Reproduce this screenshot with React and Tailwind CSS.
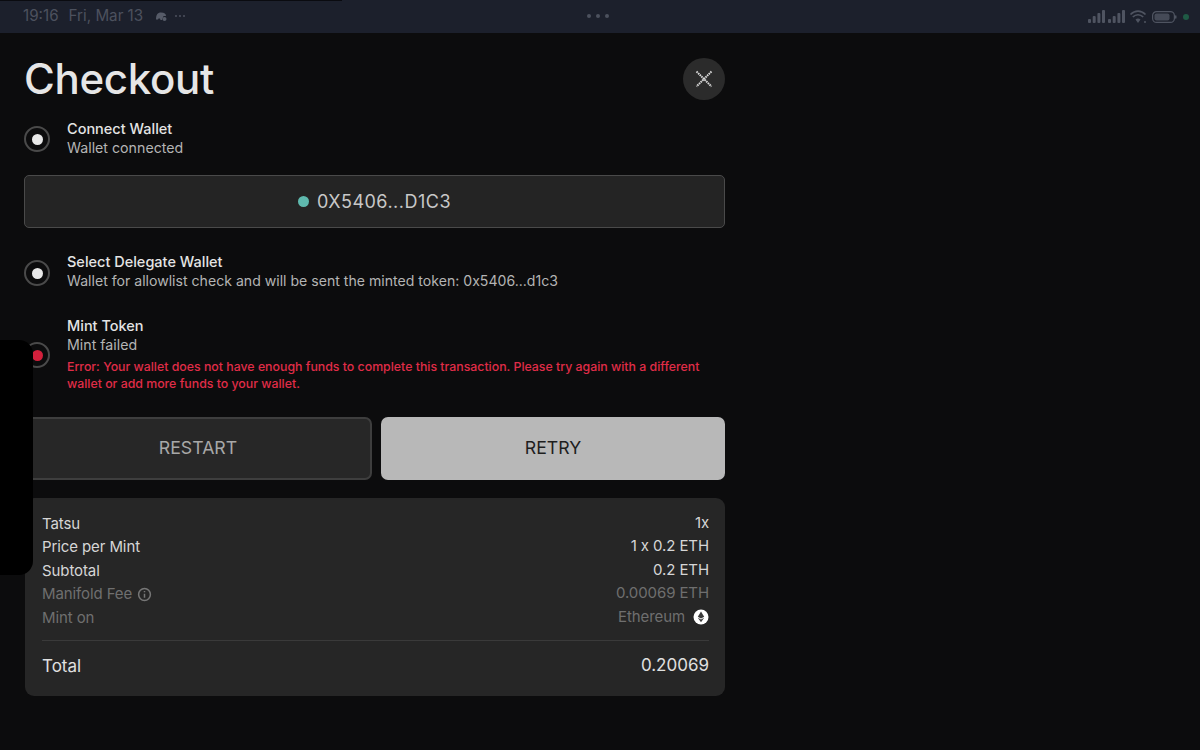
import React from "react";

const font = { fontFamily: "Inter, 'Liberation Sans', sans-serif" };

function Radio({ red }) {
  return (
    <div className="w-[26px] h-[26px] shrink-0 rounded-full border-2 border-[#4a4a4a] flex items-center justify-center">
      <div className={"w-[11px] h-[11px] rounded-full " + (red ? "bg-[#d3203c]" : "bg-[#e8e8e8]")} />
    </div>
  );
}

function Row({ left, right, dim }) {
  return (
    <div className={"flex justify-between items-center h-[23.5px] text-[15px] tracking-[-0.1px] " + (dim ? "text-[#6f6f6f]" : "text-[#d6d6d6]")}>
      <div className="flex items-center gap-[5px]">{left}</div>
      <div className="flex items-center gap-[8px] -mt-[2px]">{right}</div>
    </div>
  );
}

export default function App() {
  return (
    <div className="relative w-[1200px] h-[750px] overflow-hidden bg-[#0c0c0d]" style={font}>
      {/* status bar */}
      <div className="relative h-[33px] bg-[#1c202c] flex items-center justify-between pl-[23px] pr-[10px]">
        <div className="absolute left-0 top-0 w-[342px] h-px bg-[#0a0b10]" />
        <div className="flex items-center text-[#4c515e] text-[15.200px] w-[190px]">
          <span>19:16</span>
          <span className="ml-[10px]">Fri, Mar 13</span>
          <svg className="ml-[12px]" width="13" height="11" viewBox="0 0 13 11" fill="#565b68">
            <path d="M1 8.500C1 4 2.500 1.500 6 1.500s5 1.500 5 3.500H8.500L7 9H5.500L5 7.500H3.500L3 8.500z" />
            <circle cx="9.500" cy="8" r="2" />
          </svg>
          <span className="ml-[7px] flex gap-[2px]">
            <span className="w-[2px] h-[2px] rounded-full bg-[#4c515e]" />
            <span className="w-[2px] h-[2px] rounded-full bg-[#4c515e]" />
            <span className="w-[2px] h-[2px] rounded-full bg-[#4c515e]" />
          </span>
        </div>
        <div className="absolute left-[587px] top-[14px] flex gap-[5px]">
          <span className="w-[4px] h-[4px] rounded-full bg-[#4c515e]" />
          <span className="w-[4px] h-[4px] rounded-full bg-[#4c515e]" />
          <span className="w-[4px] h-[4px] rounded-full bg-[#4c515e]" />
        </div>
        <div className="flex items-center">
          <svg width="102" height="16" viewBox="0 0 102 16" fill="#4f5461">
            <rect x="0" y="10" width="3" height="4" rx="1" />
            <rect x="4.700" y="7" width="3" height="7" rx="1" />
            <rect x="9.400" y="4" width="3" height="10" rx="1" />
            <rect x="14" y="1" width="3" height="13" rx="1" />
            <rect x="20" y="10" width="3" height="4" rx="1" />
            <rect x="24.700" y="7" width="3" height="7" rx="1" />
            <rect x="29.400" y="4" width="3" height="10" rx="1" />
            <rect x="34" y="1" width="3" height="13" rx="1" />
            <path d="M42.500 5.500C47 1 53 1 57.500 5.500M44.800 8C47.800 5 52.200 5 55.200 8" fill="none" stroke="#4f5461" strokeWidth="1.700" />
            <path d="M47.500 10.500C49 9.300 51 9.300 52.500 10.500L50 14z" />
            <rect x="56" y="12" width="2" height="2" rx="1" />
            <rect x="64.600" y="2.600" width="21.800" height="10.800" rx="4" fill="none" stroke="#4f5461" strokeWidth="1.200" />
            <rect x="66.500" y="4.500" width="15" height="7" rx="2" fill="#454a57" />
            <rect x="87" y="6.200" width="1.500" height="3.600" rx="0.700" />
            <circle cx="98" cy="8" r="3" fill="#1f5a45" />
          </svg>
        </div>
      </div>

      {/* panel */}
      <div className="w-[701px] ml-[24px]">
        <div className="flex items-start justify-between h-[83px]">
          <h1 className="text-[42px] leading-[50px] mt-[21px] font-medium text-[#e6e6e6] tracking-[-0.3px]">Checkout</h1>
          <button className="mt-[25px] w-[42px] h-[42px] rounded-full bg-[#2b2b2b] flex items-center justify-center">
            <svg width="18" height="18" viewBox="0 0 18 18" stroke="#d8d8d8" strokeWidth="2" strokeDasharray="1.600 0.700" fill="none">
              <path d="M1.500 1.500L16.500 16.500M16.500 1.500L1.500 16.500" />
            </svg>
          </button>
        </div>

        <div className="flex items-center gap-[17px] h-[46px] -mt-[1px]">
          <div className="mt-[2px]"><Radio /></div>
          <div className="leading-[19px]">
            <div className="text-[14.500px] font-medium text-[#e4e4e4]">Connect Wallet</div>
            <div className="text-[14.200px] text-[#b4b4b4]">Wallet connected</div>
          </div>
        </div>

        <div className="mt-[14px] h-[53px] rounded-[5px] border border-[#4a4a4a] bg-[#242424] flex items-center justify-center gap-[8px]">
          <span className="w-[11px] h-[11px] rounded-full bg-[#5fb9ae]" />
          <span className="text-[18px] text-[#c8c8c8] tracking-[0.5px]">0X5406...D1C3</span>
        </div>

        <div className="flex items-center gap-[17px] h-[46px] mt-[20px]">
          <div className="mt-[4px]"><Radio /></div>
          <div className="leading-[19px]">
            <div className="text-[14.500px] font-medium text-[#e4e4e4]">Select Delegate Wallet</div>
            <div className="text-[14.100px] text-[#b4b4b4]">Wallet for allowlist check and will be sent the minted token: 0x5406...d1c3</div>
          </div>
        </div>

        <div className="flex gap-[17px] mt-[22px]">
          <div className="mt-[26px]"><Radio red /></div>
          <div>
            <div className="leading-[19px]">
              <div className="text-[14.500px] font-medium text-[#e4e4e4]">Mint Token</div>
              <div className="text-[14.200px] text-[#b4b4b4]">Mint failed</div>
            </div>
            <div className="mt-[4px] text-[12.330px] leading-[17px] font-medium text-[#e02c48] w-[650px]">
              Error: Your wallet does not have enough funds to complete this transaction. Please try again with a different wallet or add more funds to your wallet.
            </div>
          </div>
        </div>

        <div className="flex gap-[9px] mt-[25px]">
          <button className="w-[348px] h-[63px] rounded-[7px] border-2 border-[#3e3e3e] bg-[#272727] text-[17.700px] text-[#a8a8a8]">RESTART</button>
          <button className="flex-1 h-[63px] rounded-[7px] bg-[#b8b8b8] text-[17.700px] text-[#1e1e1e]">RETRY</button>
        </div>

        <div className="mt-[18px] ml-px h-[198px] rounded-[9px] bg-[#262626] pl-[17px] pr-[16px] pt-[14px]">
          <Row left="Tatsu" right="1x" />
          <Row left="Price per Mint" right="1 x 0.2 ETH" />
          <Row left="Subtotal" right="0.2 ETH" />
          <Row
            dim
            left={<>
              Manifold Fee
              <svg width="15" height="15" viewBox="0 0 14 14" fill="none" stroke="#767676" strokeWidth="1.400">
                <circle cx="7" cy="7" r="5.500" />
                <path d="M7 6.300V10M7 3.800V5" />
              </svg>
            </>}
            right="0.00069 ETH"
          />
          <Row
            dim
            left="Mint on"
            right={<>
              Ethereum
              <svg width="16" height="16" viewBox="0 0 16 16">
                <circle cx="8" cy="8" r="7.500" fill="#ffffff" />
                <path d="M8 2.500L4.800 7.800L8 9.600L11.200 7.800z" fill="#3a3a3a" />
                <path d="M4.800 8.700L8 13.300L11.200 8.700L8 10.600z" fill="#3a3a3a" />
              </svg>
            </>}
          />
          <div className="h-px bg-[#3a3a3a] mt-[10px]" />
          <div className="flex justify-between items-center mt-[14px] h-[24px] text-[#e0e0e0] text-[17px]">
            <span>Total</span>
            <span className="-mt-[2px]">0.20069</span>
          </div>
        </div>
      </div>

      {/* overlay at left edge */}
      <div className="absolute left-0 top-[340px] w-[33px] h-[235px] bg-black rounded-r-[14px]" />
    </div>
  );
}
